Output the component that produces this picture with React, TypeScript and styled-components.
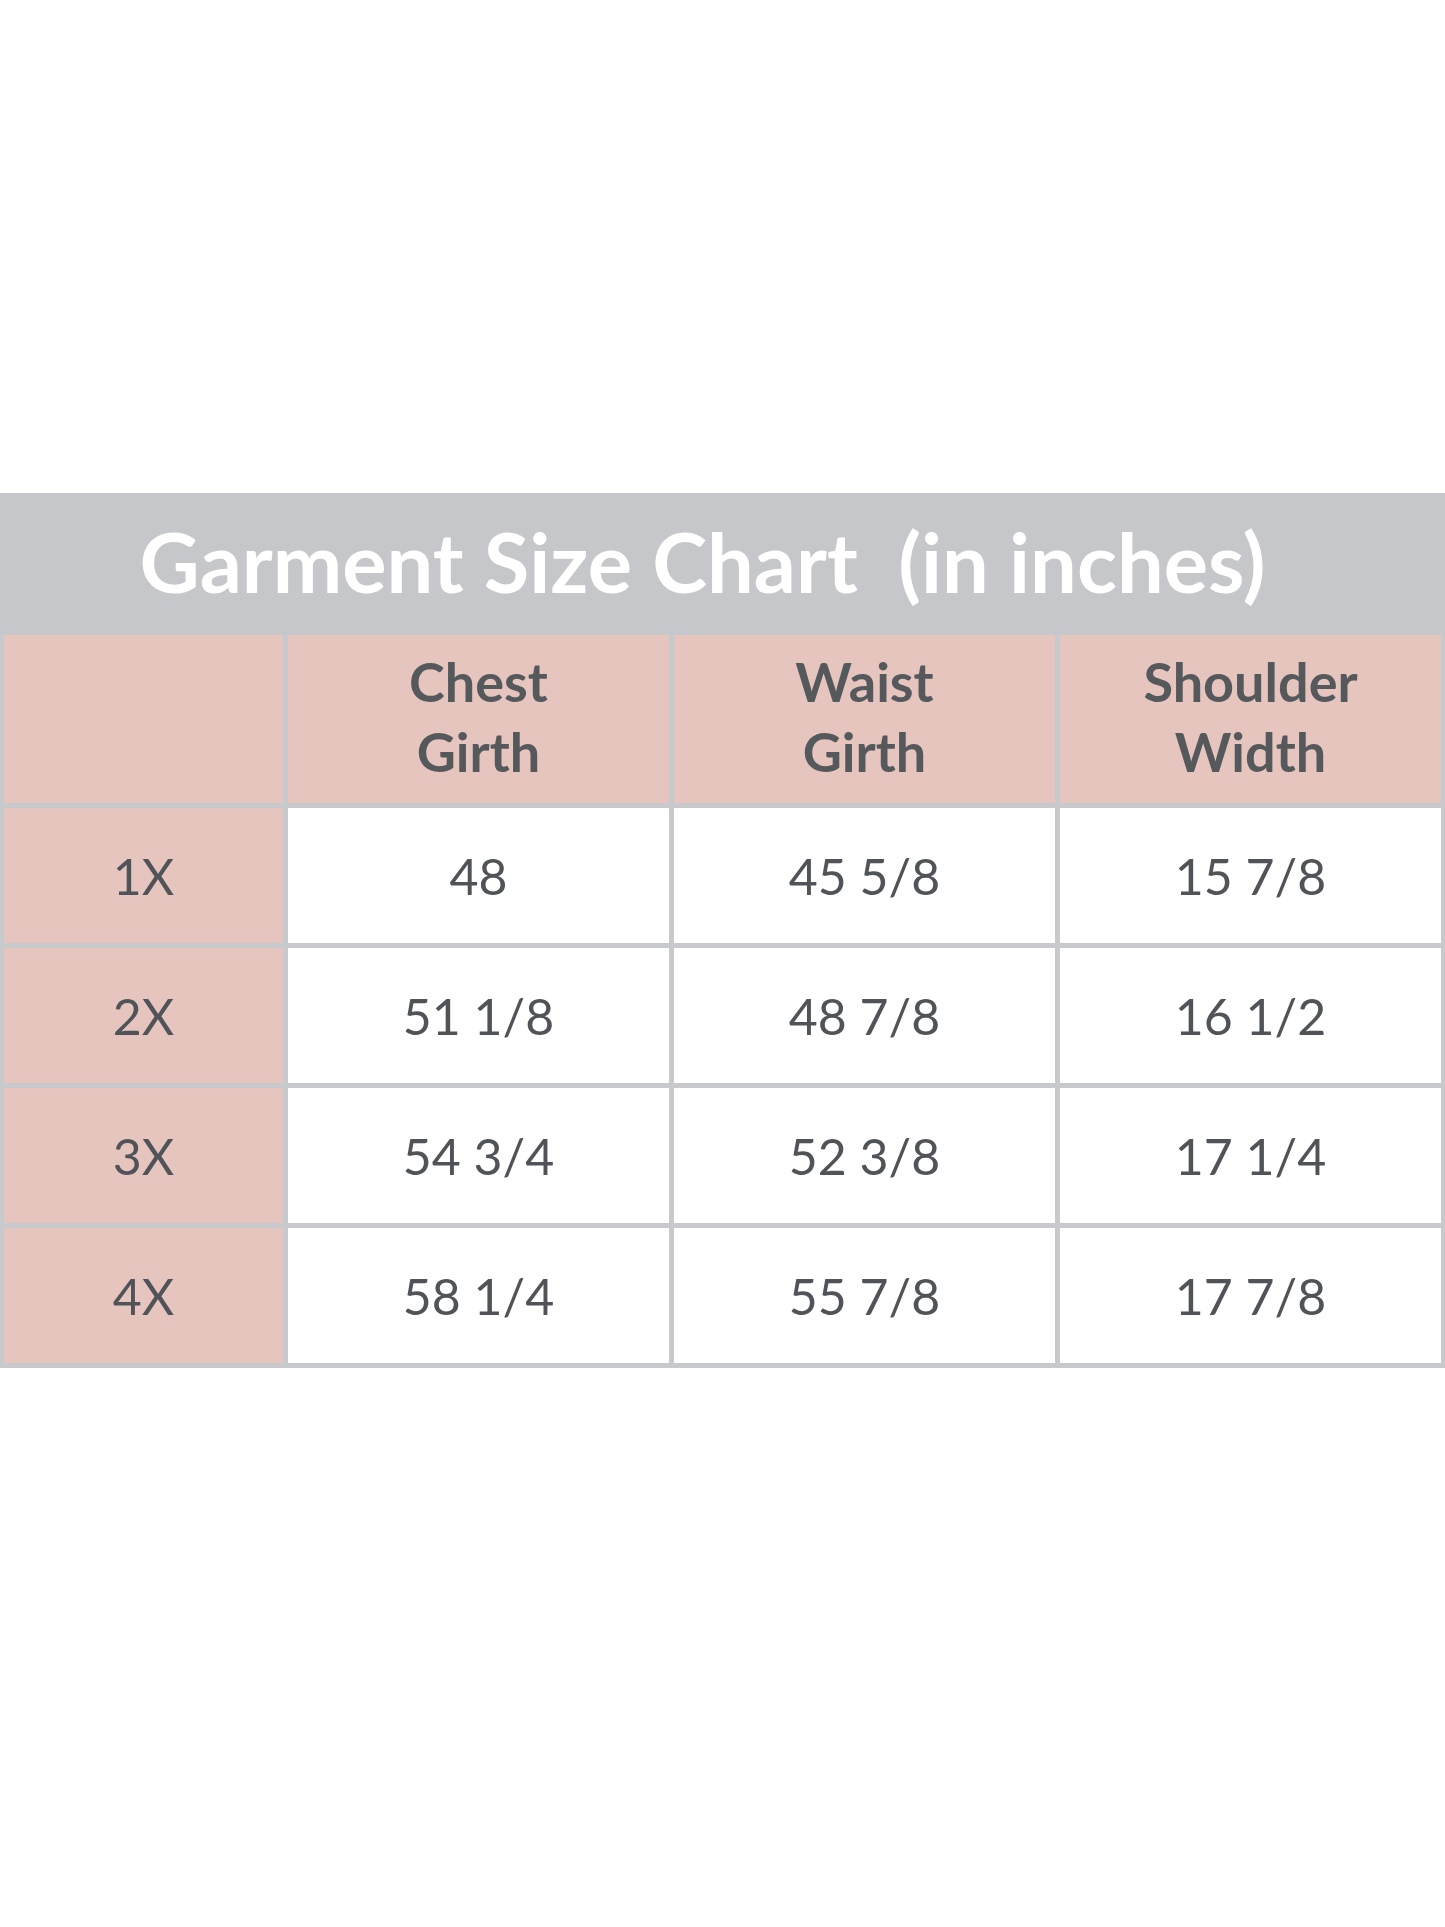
import React from 'react'
import styled, { createGlobalStyle } from 'styled-components'

const GlobalStyle = createGlobalStyle`
  html, body {
    margin: 0;
    padding: 0;
    background: #ffffff;
  }
  body {
    font-family: Lato, "Open Sans", "Liberation Sans", sans-serif;
  }
`

const Page = styled.div`
  width: 1445px;
  height: 1927px;
  padding-top: 493px;
  box-sizing: border-box;
`

const Chart = styled.div`
  display: grid;
  grid-template-columns: 279px repeat(3, 1fr);
  column-gap: 5px;
  row-gap: 5px;
  background: #c8c9cc;
  padding: 0 4px 5px 4px;
`

const Title = styled.h1`
  grid-column: 1 / -1;
  margin: 0 -4px -5px;
  height: 142px;
  display: flex;
  align-items: center;
  justify-content: center;
  padding: 0 40px 6px 0;
  box-sizing: border-box;
  background: #c6c7ca;
  color: #ffffff;
  font-family: Lato, "Liberation Sans", sans-serif;
  font-weight: 700;
  font-size: 83px;
  white-space: pre;
`

const Cell = styled.div<{ $pink?: boolean; $head?: boolean }>`
  height: ${(p) => (p.$head ? '168px' : '135px')};
  display: flex;
  align-items: center;
  justify-content: center;
  text-align: center;
  background: ${(p) => (p.$pink ? '#e6c5bf' : '#ffffff')};
  color: ${(p) => (p.$head ? '#56595c' : '#505458')};
  font-family: Lato, "Liberation Sans", sans-serif;
  font-weight: ${(p) => (p.$head ? 700 : 400)};
  font-size: ${(p) => (p.$head ? '54px' : '50px')};
  line-height: ${(p) => (p.$head ? '70px' : '1')};
  padding-bottom: ${(p) => (p.$head ? '4px' : '0')};
  box-sizing: border-box;
`

const headers = [
  ['Chest', 'Girth'],
  ['Waist', 'Girth'],
  ['Shoulder', 'Width'],
]

const rows = [
  ['1X', '48', '45 5/8', '15 7/8'],
  ['2X', '51 1/8', '48 7/8', '16 1/2'],
  ['3X', '54 3/4', '52 3/8', '17 1/4'],
  ['4X', '58 1/4', '55 7/8', '17 7/8'],
]

const App = () => {
  return (
    <Page>
      <GlobalStyle />
      <Chart>
        <Title>{'Garment Size Chart  (in inches)'}</Title>
        <Cell $pink $head />
        {headers.map((h) => (
          <Cell key={h.join('-')} $pink $head>
            {h[0]}
            <br />
            {h[1]}
          </Cell>
        ))}
        {rows.map((r) =>
          r.map((v, i) => (
            <Cell key={r[0] + i} $pink={i === 0}>
              {v}
            </Cell>
          ))
        )}
      </Chart>
    </Page>
  )
}

export default App
